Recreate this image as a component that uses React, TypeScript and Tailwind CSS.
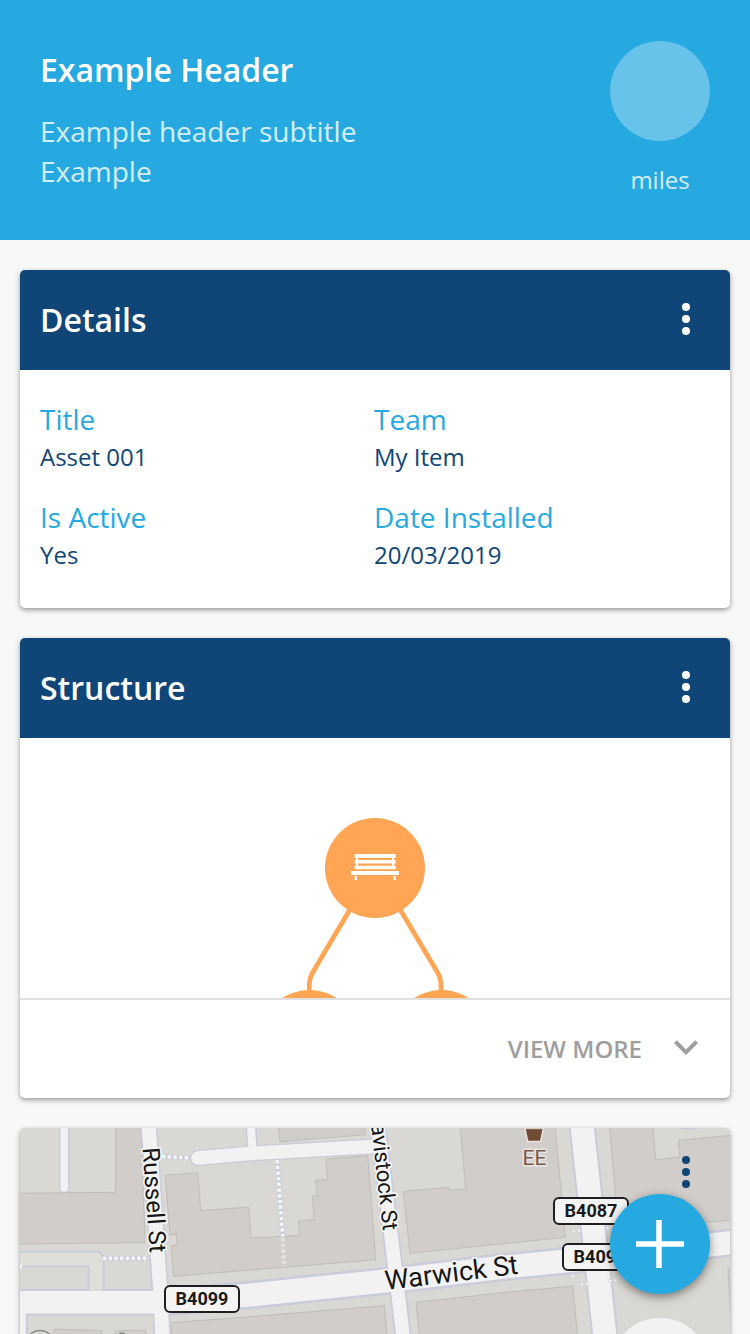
import React from "react";

const fontStack = "font-['Open_Sans','Noto_Sans',sans-serif]";

function MoreIcon() {
  return (
    <svg viewBox="0 0 24 24" className="size-12" fill="currentColor" aria-hidden="true">
      <circle cx="12" cy="6" r="2" />
      <circle cx="12" cy="12" r="2" />
      <circle cx="12" cy="18" r="2" />
    </svg>
  );
}

function CardHeader({ title }: { title: string }) {
  return (
    <div className="flex h-[100px] items-center justify-between bg-[#0f4677] px-5 text-white">
      <h2 className="text-[32px] leading-[44px] font-semibold">{title}</h2>
      <button type="button" aria-label={`${title} options`} className="pb-[2px]">
        <MoreIcon />
      </button>
    </div>
  );
}

const details = [
  { label: "Title", value: "Asset 001" },
  { label: "Team", value: "My Item" },
  { label: "Is Active", value: "Yes" },
  { label: "Date Installed", value: "20/03/2019" },
];

function StructureDiagram() {
  return (
    <svg viewBox="0 0 260 260" className="mx-auto block h-[260px] w-[260px]" aria-hidden="true">
      <g fill="none" stroke="#ffa554" strokeWidth="4.700">
        <path d="M107 168 L68.500 233 Q64.300 240 64.300 248 V256" />
        <path d="M153 168 L191.700 233 Q196 240 196 248 V256" />
      </g>
      <g fill="#ffa554">
        <circle cx="130" cy="130" r="50" />
        <circle cx="64.500" cy="302" r="50" />
        <circle cx="196.500" cy="302" r="50" />
      </g>
      <g fill="#fff">
        <rect x="109.700" y="116" width="41" height="4" />
        <rect x="109.700" y="122" width="41" height="3.500" />
        <rect x="109.700" y="127.700" width="41" height="3.500" />
        <rect x="111" y="116" width="2" height="15" />
        <rect x="147" y="116" width="2" height="15" />
        <rect x="106" y="133" width="48" height="4" />
        <rect x="109.600" y="138" width="2.400" height="4" />
        <rect x="148.300" y="138" width="2.400" height="4" />
      </g>
    </svg>
  );
}

const roads = [
  { d: "M64.300 1120 V1188", outer: 10, inner: 7.5 },
  { d: "M250.500 1120 L252.500 1150", outer: 11, inner: 8 },
  { d: "M198 1158 L250 1153.500 L376 1146.300", outer: 16, inner: 13.5 },
  { d: "M148.300 1120 L160.200 1290 L162.500 1340", outer: 17, inner: 14 },
  { d: "M377 1120 L398 1293 L403.500 1340", outer: 17, inner: 13.5 },
  { d: "M166 1302 L250 1295 L390 1280.500 L500 1267.500 L580 1259.500 L710 1245 L735 1242", outer: 28, inner: 23 },
  { d: "M581.400 1120 L605.400 1340", outer: 27, inner: 23 },
];

const buildings = [
  "M15 1193.300 L115.500 1192.300 V1120 H141 L145 1242.700 L15 1244Z",
  "M165.300 1175.300 L197.700 1172.700 L200.700 1210.700 L248.500 1207 L251 1238 L300 1235.300 L298.300 1221 L314.300 1219.700 L312.300 1196.300 L317.300 1195.700 L315.700 1180.300 L327.700 1179.300 L326 1159 L367.700 1155.700 L375.700 1259.700 L250 1270 L173.700 1276.300 L171.300 1246 L177.300 1245 L176.300 1234.300 L170 1235.300Z",
  "M278 1120 L280 1141.700 L365 1134.700 L364 1120Z",
  "M459.500 1120 L465.700 1189 L450 1190.300 L448.700 1187.300 L403.300 1191.300 L410 1253.300 L500 1244 L565.300 1237.300 L554.500 1120Z",
  "M171 1322.700 L250 1316.700 L384.300 1305.700 L387.500 1340 H172Z",
  "M416 1302.300 L500 1293 L572.700 1286 L578 1340 H420Z",
  "M609 1120 L618.500 1231 L706.700 1222.300 L735 1220 V1135 L678.300 1140.300 L680 1157 L655.700 1159.700 L652.300 1120Z",
  "M728 1269 L735 1268 V1340 H732Z",
];

const blockBuildings = [
  "M54 1340 V1329.300 L101.700 1330.300 V1340Z",
  "M115 1340 V1331 L146 1330 V1340Z",
];

const badges = [
  { x: 165, y: 1286, label: "B4099" },
  { x: 554, y: 1198, label: "B4087" },
  { x: 563, y: 1244, label: "B4099" },
];

const crossingDots = [
  [573.5, 1231.5], [579, 1230.5], [607.5, 1228], [572.5, 1276], [582, 1284.5], [587, 1284], [610.5, 1281], [615.5, 1280.5],
];

function StreetMap() {
  return (
    <svg
      viewBox="20 1128 710 206"
      preserveAspectRatio="xMinYMin slice"
      className="absolute inset-0 size-full"
      role="img"
      aria-label="Street map"
    >
      <rect x="0" y="1100" width="800" height="500" fill="#d9d8d4" />
      <g fill="#d1cdca" stroke="#bfbdb9" strokeWidth="1">
        {buildings.map((d) => (
          <path key={d} d={d} />
        ))}
      </g>

      <path d="M18 1251.500 H95 Q103 1252 103.700 1260 V1290 H88.500 V1266.500 H18Z" fill="#dfded9" />
      <g fill="none" stroke="#cacbdb" strokeWidth="1.800">
        <path d="M18 1251.500 H95 Q103 1252 103.700 1260 V1290 H152.500 L150 1258" />
        <path d="M18 1266.500 H88.500 V1290 H18" />
        <path d="M678 1126 Q684 1131 700 1127.500" />
      </g>
      <rect x="20" y="1264.500" width="2" height="4" fill="#f2f2f2" />

      <g fill="none" stroke="#cacbdb" strokeLinecap="round" strokeLinejoin="round">
        {roads.map((r) => (
          <path key={r.d} d={r.d} strokeWidth={r.outer} />
        ))}
      </g>
      <path d="M18 1291 H160 V1313.500 H154.500 V1340 H18Z" fill="#f2f2f2" />
      <path d="M26.700 1340 V1314.500 H154 V1340" fill="#d9d8d4" stroke="#cacbdb" strokeWidth="2" />
      <g fill="#d1cdca" stroke="#bfbdb9">
        {blockBuildings.map((d) => (
          <path key={d} d={d} />
        ))}
      </g>
      <circle cx="40" cy="1345" r="14.500" fill="none" stroke="#8f8e8b" strokeWidth="1.500" />
      <path d="M119 1334 Q122 1332 125 1334" fill="none" stroke="#8f8e8b" strokeWidth="1.500" />
      <g fill="none" stroke="#f2f2f2" strokeLinecap="round" strokeLinejoin="round">
        {roads.map((r) => (
          <path key={r.d} d={r.d} strokeWidth={r.inner} />
        ))}
      </g>

      <g fill="none" stroke="#cacbdb" strokeWidth="4.500">
        <path d="M161.500 1156.500 L190 1157.800" />
        <path d="M277 1159.300 L282.700 1236.500" />
        <path d="M103 1258.300 H149" />
      </g>
      <g fill="none" stroke="#f6f6f6" strokeWidth="3.500" strokeDasharray="3.400 2.300">
        <path d="M162 1156.500 L190 1157.800" />
        <path d="M277 1160 L282.700 1236.500" />
        <path d="M103 1258.300 H149" />
      </g>
      <path d="M282.700 1238 L284.300 1267" stroke="#e6e4e0" strokeWidth="3.500" strokeDasharray="3.400 2.300" />
      {crossingDots.map(([x, y]) => (
        <rect key={`${x}-${y}`} x={x - 1.5} y={y - 1.5} width="3" height="3" fill="#f5f5f5" stroke="#cacbdb" strokeWidth="0.600" />
      ))}

      <g
        fontFamily="Roboto, 'Open Sans', sans-serif"
        fill="#161616"
        stroke="#f4f4f4"
        strokeWidth="3.500"
        strokeLinejoin="round"
        paintOrder="stroke"
      >
        <text transform="translate(142.500 1148) rotate(86)" fontSize="24">Russell St</text>
        <text transform="translate(383 1231) rotate(83.600)" fontSize="22" textAnchor="end">avistock St</text>
        <text transform="translate(386 1290) rotate(-7)" fontSize="27">Warwick St</text>
        <text x="534.500" y="1165" fontSize="21" textAnchor="middle" fill="#775a4b" stroke="#e5e2df">EE</text>
      </g>
      <path d="M525.300 1127 H543 L540 1140.700 H528.300Z" fill="#6e4c35" stroke="#e8e5e2" strokeWidth="3" paintOrder="stroke" />
      <path d="M524 1128.700 H544" stroke="#e8e5e2" strokeWidth="1" />

      {badges.map((b) => (
        <g key={`${b.x}-${b.y}`}>
          <rect x={b.x} y={b.y} width="74" height="26" rx="5" fill="#f4f4f4" stroke="#1f1f1f" strokeWidth="2" />
          <text x={b.x + 37} y={b.y + 19} fontFamily="Roboto, sans-serif" fontWeight="700" fontSize="18" textAnchor="middle" fill="#1a1a1a">
            {b.label}
          </text>
        </g>
      ))}
      <circle cx="660" cy="1368" r="50" fill="#f2f2f2" />
    </svg>
  );
}

const cardShadow = "shadow-[0_2px_5px_rgba(0,0,0,0.4)]";

export default function App() {
  return (
    <div className={`flex min-h-screen flex-col bg-[#f8f8f8] ${fontStack}`}>
      <header className="flex justify-between bg-[#26a9e1] px-10 pt-[41px] pb-[42px] text-white">
        <div>
          <h1 className="text-[32px] leading-[58px] font-semibold">Example Header</h1>
          <p className="mt-3 text-[28px] leading-[40px] text-white/80">
            Example header subtitle
            <br />
            Example
          </p>
        </div>
        <div className="flex flex-col items-center">
          <div className="size-[100px] rounded-full bg-white/30" />
          <p className="mt-[21px] text-[24px] leading-[36px] text-white/80">miles</p>
        </div>
      </header>

      <main className="flex flex-1 flex-col gap-[30px] px-5 pt-[30px]">
        <section className={`overflow-hidden rounded-[5px] bg-white ${cardShadow}`}>
          <CardHeader title="Details" />
          <dl className="grid grid-cols-2 gap-y-[22px] pt-[30px] pr-[22px] pb-[34px] pl-5">
            {details.map((item) => (
              <div key={item.label}>
                <dt className="text-[28px] leading-[38px] text-[#26a9e1]">{item.label}</dt>
                <dd className="text-[24px] leading-[38px] text-[#0f4677]">{item.value}</dd>
              </div>
            ))}
          </dl>
        </section>

        <section className={`overflow-hidden rounded-[5px] bg-white ${cardShadow}`}>
          <CardHeader title="Structure" />
          <StructureDiagram />
          <button
            type="button"
            className="flex h-[100px] w-full items-center justify-end gap-5 border-t-2 border-[#e0e0e0] px-5 text-[24px] leading-[36px] font-semibold text-[#9e9e9e]"
          >
            VIEW MORE
            <svg viewBox="0 0 24 24" className="size-12" fill="currentColor" aria-hidden="true">
              <path d="M7.410 7.640 12 12.220l4.590-4.580L18 9.050l-6 6-6-6z" />
            </svg>
          </button>
        </section>

        <section className={`relative min-h-[206px] flex-1 overflow-hidden rounded-t-[5px] bg-[#d9d8d4] ${cardShadow}`}>
          <StreetMap />
          <button type="button" aria-label="Map options" className="absolute top-5 right-5 text-[#0f4677]">
            <MoreIcon />
          </button>
        </section>
      </main>

      <button
        type="button"
        aria-label="Add"
        className="fixed right-10 bottom-10 flex size-[100px] items-center justify-center rounded-full bg-[#26a9e1] text-white shadow-[0_3px_10px_rgba(0,0,0,0.45)]"
      >
        <svg viewBox="0 0 48 48" className="size-12" stroke="currentColor" strokeWidth="5.500" aria-hidden="true">
          <path d="M23 0V48M0 24H48" />
        </svg>
      </button>
    </div>
  );
}
